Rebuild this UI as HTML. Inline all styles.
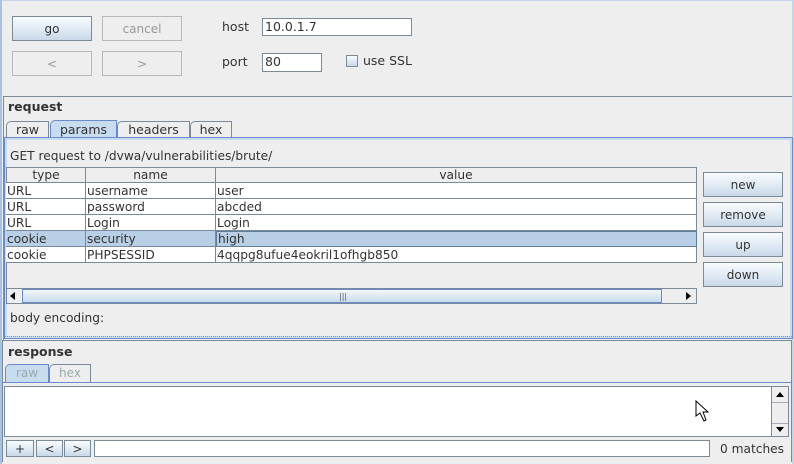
<!DOCTYPE html>
<html><head><style>
body{margin:0;width:794px;height:464px;background:#eeeeee;position:relative;overflow:hidden;font-family:"DejaVu Sans","Liberation Sans",sans-serif;font-size:12px;color:#333}
.a{position:absolute;box-sizing:border-box}
.btn{position:absolute;box-sizing:border-box;border:1px solid #7a8a99;background:linear-gradient(#f8fbfe,#dde8f3 60%,#c8d8e8);text-align:center;color:#333;font-size:12px}
.dis{background:#eeeeee;border-color:#b8b8b8;color:#999}
.fld{position:absolute;box-sizing:border-box;background:#fff;border:1px solid #7a8a99;font-size:12.5px;padding-left:2px;line-height:15px}
.tab{position:absolute;box-sizing:border-box;border:1px solid #7a8a99;border-bottom:none;background:#eeeeee;text-align:center;font-size:12.5px;border-top-left-radius:5px 5px}
.cell{position:absolute;box-sizing:border-box;border-right:1px solid #7a8a99;border-bottom:1px solid #7a8a99;height:16px;line-height:16px;padding-left:1px;font-size:12.2px;white-space:nowrap;overflow:hidden;background:#fff}
.hd{background:#eeeeee;text-align:center;padding:0}
</style></head><body>
<div class="a" style="left:0;top:0;width:794px;height:1px;background:#c4d6ec"></div>
<div class="a" style="left:0;top:0;width:2px;height:464px;background:#a9c2e0"></div>
<div class="a" style="left:792px;top:0;width:2px;height:464px;background:#c4d6ec"></div>

<div class="btn" style="left:12px;top:16px;width:80px;height:25px;line-height:24px">go</div>
<div class="btn dis" style="left:102px;top:16px;width:80px;height:25px;line-height:24px">cancel</div>
<div class="btn dis" style="left:12px;top:51px;width:80px;height:25px;line-height:24px">&lt;</div>
<div class="btn dis" style="left:102px;top:51px;width:80px;height:25px;line-height:24px">&gt;</div>
<div class="a" style="left:222px;top:19px;font-size:12.5px">host</div>
<div class="fld" style="left:262px;top:18px;width:150px;height:18px">10.0.1.7</div>
<div class="a" style="left:222px;top:54px;font-size:12.5px">port</div>
<div class="fld" style="left:262px;top:53px;width:60px;height:19px">80</div>
<div class="a" style="left:346px;top:55px;width:12px;height:12px;border:1px solid #7a8a99;background:linear-gradient(#f8fbfe,#c8d8e8)"></div>
<div class="a" style="left:363px;top:53px;font-size:12.5px">use SSL</div>

<div class="a" style="left:3px;top:96px;width:789px;height:244px;border-top:1px solid #7a8a99;border-left:1px solid #7a8a99"></div>
<div class="a" style="left:8px;top:99px;font-weight:bold;font-size:12.5px">request</div>
<div class="tab" style="left:6px;top:121px;width:43px;height:17px;line-height:16px">raw</div>
<div class="tab" style="left:50px;top:120px;width:67px;height:18px;line-height:18px;background:#c8dcf0;border-color:#6a8acc">params</div>
<div class="tab" style="left:117px;top:121px;width:73px;height:17px;line-height:16px">headers</div>
<div class="tab" style="left:190px;top:121px;width:42px;height:17px;line-height:16px">hex</div>
<div class="a" style="left:5px;top:138px;width:787px;height:200px;border:2px solid #c8dcf0;outline:1px solid #6a8acc"></div>
<div class="a" style="left:10px;top:149px;font-size:12.2px">GET request to /dvwa/vulnerabilities/brute/</div>

<div class="a" style="left:6px;top:167px;width:691px;height:137px;border:1px solid #7a8a99;border-right:none;background:#eeeeee"></div>
<div class="cell hd" style="left:6px;top:167px;width:80px;border-left:1px solid #7a8a99;border-top:1px solid #7a8a99;line-height:14px">type</div>
<div class="cell hd" style="left:86px;top:167px;width:130px;border-top:1px solid #7a8a99;line-height:14px">name</div>
<div class="cell hd" style="left:216px;top:167px;width:481px;border-top:1px solid #7a8a99;line-height:14px">value</div>

<div class="cell" style="left:6px;top:183px;width:80px">URL</div><div class="cell" style="left:86px;top:183px;width:130px">username</div><div class="cell" style="left:216px;top:183px;width:481px">user</div>
<div class="cell" style="left:6px;top:199px;width:80px">URL</div><div class="cell" style="left:86px;top:199px;width:130px">password</div><div class="cell" style="left:216px;top:199px;width:481px">abcded</div>
<div class="cell" style="left:6px;top:215px;width:80px">URL</div><div class="cell" style="left:86px;top:215px;width:130px">Login</div><div class="cell" style="left:216px;top:215px;width:481px">Login</div>
<div class="cell" style="left:6px;top:231px;width:80px;background:#b8cfe5">cookie</div><div class="cell" style="left:86px;top:231px;width:130px;background:#b8cfe5">security</div><div class="cell" style="left:216px;top:231px;width:481px;background:#b8cfe5;border:1px solid #637d97;line-height:14px">high</div>
<div class="cell" style="left:6px;top:247px;width:80px">cookie</div><div class="cell" style="left:86px;top:247px;width:130px">PHPSESSID</div><div class="cell" style="left:216px;top:247px;width:481px">4qqpg8ufue4eokril1ofhgb850</div>

<div class="a" style="left:6px;top:288px;width:691px;height:16px;border:1px solid #7a8a99;background:#eeeeee"></div>
<div class="a" style="left:10px;top:292px;width:0;height:0;border:4px solid transparent;border-right:5px solid #000;border-left:none"></div>
<div class="a" style="left:22px;top:289px;width:640px;height:14px;border:1px solid #6a8acc;background:linear-gradient(#f4f8fc,#c8dcf0)"></div>
<div class="a" style="left:339px;top:292px;font-size:8px;color:#556">|||</div>
<div class="a" style="left:686px;top:292px;width:0;height:0;border:4px solid transparent;border-left:5px solid #000;border-right:none"></div>

<div class="btn" style="left:703px;top:172px;width:80px;height:25px;line-height:24px">new</div>
<div class="btn" style="left:703px;top:202px;width:80px;height:25px;line-height:24px">remove</div>
<div class="btn" style="left:703px;top:232px;width:80px;height:25px;line-height:24px">up</div>
<div class="btn" style="left:703px;top:262px;width:80px;height:25px;line-height:24px">down</div>
<div class="a" style="left:10px;top:311px;font-size:12.2px">body encoding:</div>

<div class="a" style="left:3px;top:336px;width:789px;height:0;border-top:1px dotted #8899aa"></div>
<div class="a" style="left:2px;top:340px;width:790px;height:122px;border:1px solid #7a8a99"></div>
<div class="a" style="left:8px;top:344px;font-weight:bold;font-size:12.5px">response</div>
<div class="tab" style="left:5px;top:364px;width:44px;height:18px;line-height:17px;background:#c8dcf0;border-color:#6a8acc;color:#9aa;font-size:12px">raw</div>
<div class="tab" style="left:49px;top:364px;width:42px;height:18px;line-height:17px;color:#9aa;font-size:12px">hex</div>
<div class="a" style="left:3px;top:382px;width:788px;height:80px;border-top:1px solid #6a8acc;background:#eeeeee"></div>
<div class="a" style="left:4px;top:386px;width:785px;height:51px;border:1px solid #7a8a99;background:#fff"></div>
<div class="a" style="left:771px;top:387px;width:17px;height:49px;border-left:1px solid #7a8a99;background:#eeeeee"></div>
<div class="a" style="left:776px;top:392px;width:0;height:0;border:4px solid transparent;border-bottom:5px solid #000;border-top:none"></div>
<div class="a" style="left:772px;top:402px;width:16px;height:22px;border-top:1px solid #aab;border-bottom:1px solid #aab"></div>
<div class="a" style="left:776px;top:427px;width:0;height:0;border:4px solid transparent;border-top:5px solid #000;border-bottom:none"></div>
<svg class="a" style="left:694px;top:400px" width="16" height="24"><path d="M2 1 L2 16 L6 13 L10 21 L12 20 L9 12 L14 12 Z" fill="#fff" stroke="#000" stroke-width="1"/></svg>

<div class="btn" style="left:6px;top:440px;width:28px;height:17px;line-height:16px">+</div>
<div class="btn" style="left:36px;top:440px;width:27px;height:17px;line-height:16px">&lt;</div>
<div class="btn" style="left:64px;top:440px;width:27px;height:17px;line-height:16px">&gt;</div>
<div class="fld" style="left:94px;top:440px;width:616px;height:17px"></div>
<div class="a" style="left:720px;top:442px;font-size:12.2px">0 matches</div>
</body></html>
